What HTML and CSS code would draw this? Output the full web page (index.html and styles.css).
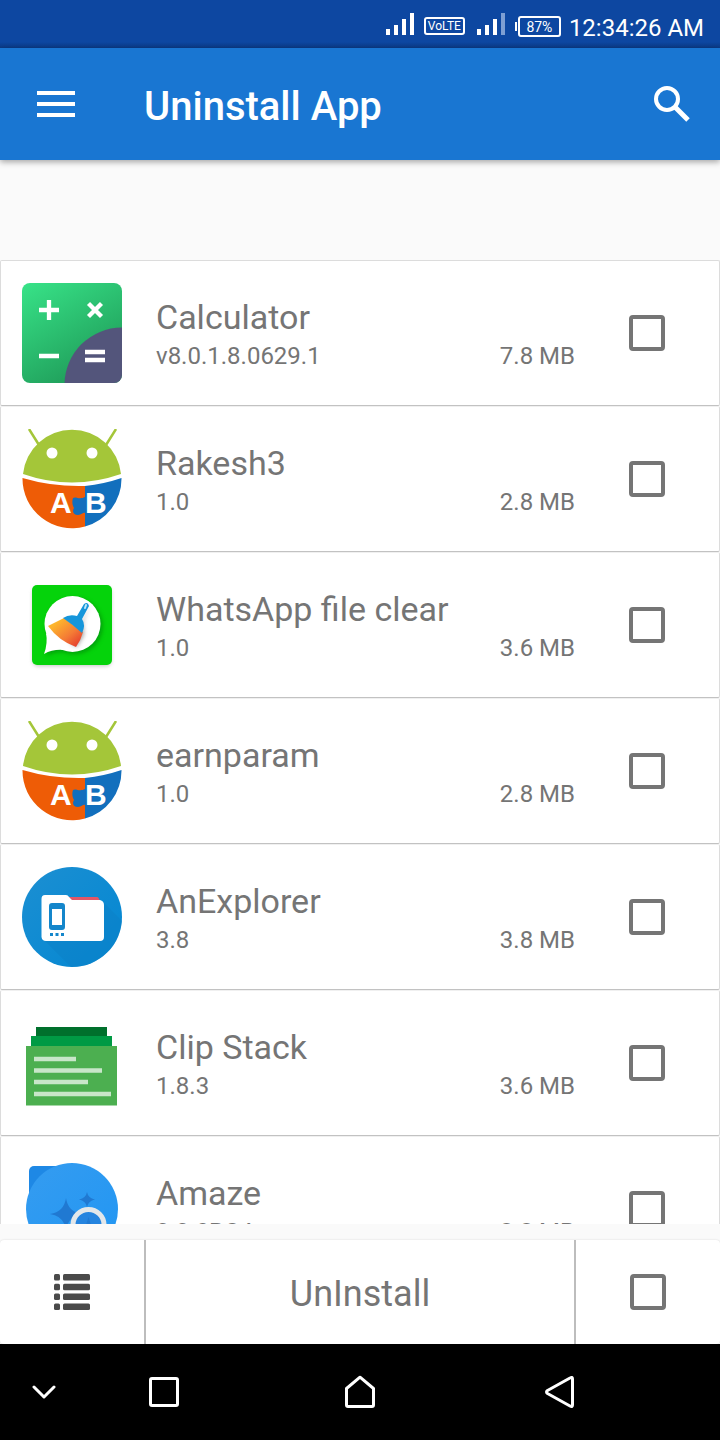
FILE: index.html
```html
<!DOCTYPE html>
<html lang="en">
<head>
  <meta charset="UTF-8" />
  <meta name="viewport" content="width=device-width, initial-scale=1" />
  <title>Uninstall App</title>
  <link rel="stylesheet" href="styles.css">
</head>
<body>
  <!-- Shared drawings -->
  <svg class="sprite" aria-hidden="true">
    <symbol id="robot" viewBox="0 0 100 100">
      <path d="M7 0L17 16M94 0L84 16" stroke="#a4c639" stroke-width="2.500" />
      <path d="M1 45A49.250 49.250 0 0 1 99 45Q50 62 1 45Z" fill="#a4c639" />
      <circle cx="30" cy="24" r="5.5" fill="#fff" />
      <circle cx="70" cy="24" r="5.5" fill="#fff" />
      <path d="M0.5 49Q31 58 63 57V97.5A49.5 49.5 0 0 1 0.5 49Z" fill="#ee5c06" />
      <path d="M63 57Q82 55 99.5 49A49.5 49.5 0 0 1 63 97.500V84C61 83 60 86 56 86C51 86 50 82 52 79C50 76 50 72 51 69C54 67 57 71 63 68Z" fill="#126fbd" />
      <text x="28" y="84" class="robot-letter">A</text>
      <text x="63" y="84" class="robot-letter">B</text>
    </symbol>
    <symbol id="signal" viewBox="0 0 28 22">
      <path d="M0 16h4v6H0zM8 12h4v10H8zM16 6h4v16h-4z" fill="#fff" />
    </symbol>
  </svg>

  <div class="status-bar">
    <svg class="signal" viewBox="0 0 28 22"><use href="#signal" /><path d="M24 0h4v22h-4z" fill="#fff" /></svg>
    <span class="volte">VoLTE</span>
    <svg class="signal" viewBox="0 0 28 22"><use href="#signal" /><path d="M24 0h4v22h-4z" fill="#7e9fd3" /></svg>
    <span class="battery"><span class="battery-level">87%</span></span>
    <span class="clock">12:34:26 AM</span>
  </div>

  <header class="app-bar">
    <button class="icon-button" aria-label="Menu">
      <svg width="38" height="26" viewBox="0 0 38 26"><path d="M0 2h38M0 13h38M0 24h38" stroke="#fff" stroke-width="4" /></svg>
    </button>
    <h1>Uninstall App</h1>
    <button class="icon-button" aria-label="Search">
      <svg width="36" height="36" viewBox="0 0 36 36" fill="none" stroke="#fff"><circle cx="13" cy="13" r="11" stroke-width="4" /><path d="M21 21L34 34" stroke-width="5" /></svg>
    </button>
  </header>

  <main class="app-list">
    <label class="app-row">
      <svg class="app-icon" viewBox="0 0 100 100">
        <defs>
          <linearGradient id="calcGreen" x1="0" y1="0" x2="0.6" y2="1"><stop offset="0" stop-color="#38e388" /><stop offset="1" stop-color="#1f9c59" /></linearGradient>
          <clipPath id="calcClip"><rect width="100" height="100" rx="8" /></clipPath>
        </defs>
        <g clip-path="url(#calcClip)">
          <rect width="100" height="100" fill="url(#calcGreen)" />
          <circle cx="100" cy="102" r="57.500" fill="#53557b" />
        </g>
        <path d="M17 27H37M27 17V37M66.500 20.500L79.500 33.500M79.500 20.500L66.500 33.500M17 73H37M63 69H83M63 77H83" stroke="#fff" stroke-width="4.300" />
      </svg>
      <span class="app-info">
        <span class="app-name">Calculator</span>
        <span class="app-meta"><span>v8.0.1.8.0629.1</span><span>7.8 MB</span></span>
      </span>
      <input type="checkbox" class="tick">
    </label>

    <label class="app-row">
      <svg class="app-icon" viewBox="0 0 100 100"><use href="#robot" /></svg>
      <span class="app-info">
        <span class="app-name">Rakesh3</span>
        <span class="app-meta"><span>1.0</span><span>2.8 MB</span></span>
      </span>
      <input type="checkbox" class="tick">
    </label>

    <label class="app-row">
      <svg class="app-icon" viewBox="0 0 100 100">
        <defs>
          <linearGradient id="bristle" x1="0" y1="0" x2="1" y2="1"><stop offset="0.2" stop-color="#fdb52c" /><stop offset="0.6" stop-color="#f47b35" /><stop offset="1" stop-color="#e02b2b" /></linearGradient>
          <filter id="soft" x="-30%" y="-30%" width="160%" height="160%"><feGaussianBlur stdDeviation="2" /></filter>
        </defs>
        <rect x="11" y="13" width="78" height="78" rx="5" fill="#999" opacity="0.6" filter="url(#soft)" />
        <rect x="10" y="10" width="80" height="80" rx="5" fill="#05d30b" />
        <g transform="translate(2 2)" fill="#067d09" opacity="0.6" filter="url(#soft)">
          <circle cx="50.500" cy="49" r="28" /><path d="M24 58Q26 68 22 79Q31 74 42 75Z" />
        </g>
        <g fill="#fff"><circle cx="50.500" cy="49" r="28" /><path d="M24 58Q26 68 22 79Q31 74 42 75Z" /></g>
        <path d="M68 30L61 47L62 60L55 72L48 68Z" fill="#555" opacity="0.5" filter="url(#soft)" />
        <path d="M42 43L26 51Q37 66 54 72Q59 65 61 57Z" fill="url(#bristle)" />
        <path d="M41 43Q47 39 55 41L62 29Q66 26 67 31L60 44Q64 50 60 58Q50 49 41 43Z" fill="#1696db" />
        <path d="M64 30L63 33" stroke="#bfe8fa" stroke-width="2" stroke-linecap="round" />
      </svg>
      <span class="app-info">
        <span class="app-name">WhatsApp file clear</span>
        <span class="app-meta"><span>1.0</span><span>3.6 MB</span></span>
      </span>
      <input type="checkbox" class="tick">
    </label>

    <label class="app-row">
      <svg class="app-icon" viewBox="0 0 100 100"><use href="#robot" /></svg>
      <span class="app-info">
        <span class="app-name">earnparam</span>
        <span class="app-meta"><span>1.0</span><span>2.8 MB</span></span>
      </span>
      <input type="checkbox" class="tick">
    </label>

    <label class="app-row">
      <svg class="app-icon" viewBox="0 0 100 100">
        <defs>
          <linearGradient id="explorerBlue" x1="0" y1="0" x2="1" y2="1"><stop offset="0" stop-color="#1c8fd2" /><stop offset="1" stop-color="#0387d2" /></linearGradient>
          <clipPath id="explorerClip"><circle cx="50" cy="50" r="50" /></clipPath>
        </defs>
        <circle cx="50" cy="50" r="50" fill="url(#explorerBlue)" />
        <path d="M21 72L49 100H100V54L80 34Z" fill="#0b80c6" opacity="0.5" clip-path="url(#explorerClip)" />
        <path d="M46 30H75Q77 30 78 35H46Z" fill="#e35667" />
        <path d="M23 28H44Q46 28 47 30L50 33H78Q82 34 82 38V70Q82 74 78 74H24Q20 74 19.500 70V32Q19.500 28 23 28Z" fill="#fff" />
        <path d="M30 36H40Q43 36 43 39V60Q43 63 40 63H30Q27 63 27 60V39Q27 36 30 36ZM30 42V58H40V42Z" fill="#1486cb" fill-rule="evenodd" />
        <path d="M28 66h3v3h-3zM33.500 66h3v3h-3zM39 66h3v3h-3z" fill="#1486cb" />
      </svg>
      <span class="app-info">
        <span class="app-name">AnExplorer</span>
        <span class="app-meta"><span>3.8</span><span>3.8 MB</span></span>
      </span>
      <input type="checkbox" class="tick">
    </label>

    <label class="app-row">
      <svg class="app-icon" viewBox="0 0 100 100">
        <path d="M14 14H85V24H14Z" fill="#00702c" />
        <path d="M9 23H90V34H9Z" fill="#009a44" />
        <path d="M4 33H95V92.500H4Z" fill="#4caf50" />
        <path d="M12 46H54M12 57.500H80M12 69H66M12 81H89" stroke="#c8e6c9" stroke-width="4.600" />
      </svg>
      <span class="app-info">
        <span class="app-name">Clip Stack</span>
        <span class="app-meta"><span>1.8.3</span><span>3.6 MB</span></span>
      </span>
      <input type="checkbox" class="tick">
    </label>

    <label class="app-row">
      <svg class="app-icon" viewBox="0 0 100 100">
        <defs>
          <linearGradient id="amazeBlue" x1="0" y1="0" x2="1" y2="1"><stop offset="0" stop-color="#359cf0" /><stop offset="1" stop-color="#2196f3" /></linearGradient>
        </defs>
        <rect x="7" y="7" width="60" height="60" rx="5" fill="#1e88e5" />
        <circle cx="50" cy="50" r="46" fill="url(#amazeBlue)" />
        <path d="M44 39Q46 53 60 55Q46 57 44 71Q42 57 28 55Q42 53 44 39ZM65 33Q66 39 73 40.500Q66 42 65 48Q64 42 57 40.500Q64 39 65 33Z" fill="#2079d2" />
        <circle cx="66.500" cy="66" r="15.500" fill="#2584df" stroke="#e3e7ea" stroke-width="5" />
        <path d="M66.500 58L69 66H64Z" fill="#2079d2" />
      </svg>
      <span class="app-info">
        <span class="app-name">Amaze</span>
        <span class="app-meta"><span>3.3.0RC4</span><span>8.8 MB</span></span>
      </span>
      <input type="checkbox" class="tick">
    </label>
  </main>

  <div class="action-bar">
    <button class="action" aria-label="List options">
      <svg width="36" height="36" viewBox="0 0 36 36" fill="#4a4a4a">
        <rect width="6" height="6.500" rx="1.500" /><rect x="9" width="27" height="6.500" rx="1.500" />
        <rect y="9.800" width="6" height="6.500" rx="1.500" /><rect x="9" y="9.800" width="27" height="6.500" rx="1.500" />
        <rect y="19.600" width="6" height="6.500" rx="1.500" /><rect x="9" y="19.600" width="27" height="6.500" rx="1.500" />
        <rect y="29.500" width="6" height="6.500" rx="1.500" /><rect x="9" y="29.500" width="27" height="6.500" rx="1.500" />
      </svg>
    </button>
    <button class="action uninstall">UnInstall</button>
    <label class="action"><input type="checkbox" class="tick" aria-label="Select all"></label>
  </div>

  <nav class="system-nav">
    <button aria-label="Hide navigation bar">
      <svg width="24" height="14" viewBox="0 0 24 14"><path d="M2 2L12 12L22 2" /></svg>
    </button>
    <button aria-label="Recent apps">
      <svg width="32" height="32" viewBox="0 0 32 32"><rect x="2.500" y="2.500" width="27" height="27" rx="1.500" /></svg>
    </button>
    <button aria-label="Home">
      <svg width="32" height="34" viewBox="0 0 32 34"><path d="M2.500 13.500L16 2.200L29.500 13.500V30Q29.500 31.500 28 31.500H4Q2.500 31.500 2.500 30Z" /></svg>
    </button>
    <button aria-label="Back">
      <svg width="32" height="34" viewBox="0 0 32 34"><path d="M28.500 4V30Q28.500 32.500 26 31L3.500 18.500Q1.500 17 3.500 15.500L26 3Q28.500 1.500 28.500 4Z" /></svg>
    </button>
  </nav>
</body>
</html>
```
FILE: styles.css
```css
* {
  box-sizing: border-box;
}

body {
  margin: 0;
  height: 100vh;
  display: flex;
  flex-direction: column;
  font-family: Roboto, "Liberation Sans", sans-serif;
  background: #fafafa;
  color: #757575;
}

button {
  font: inherit;
  color: inherit;
  background: none;
  border: none;
  padding: 0;
  cursor: pointer;
}

svg {
  display: block;
}

.sprite {
  display: none;
}

.robot-letter {
  font-family: "Liberation Sans", sans-serif;
  font-size: 30px;
  font-weight: bold;
  fill: #fff;
}

/* Status bar */
.status-bar {
  display: flex;
  align-items: center;
  justify-content: flex-end;
  height: 48px;
  padding: 4px 16px 0 0;
  background: linear-gradient(#0d47a1 42px, #0b3a86);
  color: #fff;
}

.signal {
  width: 28px;
  height: 22px;
  margin: 0 10px 4px 12px;
}

.volte {
  width: 41px;
  height: 18px;
  border: 2px solid #fff;
  border-radius: 3px;
  font-size: 12px;
  line-height: 14px;
  text-align: center;
}

.battery {
  display: flex;
  align-items: center;
  margin-right: 8px;
}

.battery::before {
  content: "";
  width: 2px;
  height: 9px;
  margin-right: 1px;
  background: #fff;
}

.battery-level {
  width: 43px;
  height: 21px;
  border: 2px solid #fff;
  border-radius: 3px;
  font-size: 14px;
  line-height: 18px;
  text-align: center;
}

.clock {
  padding-top: 4px;
  font-size: 24px;
  line-height: 28px;
}

/* App bar */
.app-bar {
  display: flex;
  align-items: center;
  height: 112px;
  padding: 0 30px 0 37px;
  background: #1976d2;
  color: #fff;
  box-shadow: 0 2px 6px rgba(0, 0, 0, 0.35);
}

.app-bar h1 {
  flex: 1;
  margin: 0;
  padding: 6px 0 0 69px;
  font-size: 40px;
  font-weight: 500;
  line-height: 48px;
}

/* App list */
.app-list {
  flex: 1;
  min-height: 0;
  overflow: hidden;
  margin-top: 100px;
  margin-bottom: 16px;
}

.app-row {
  display: flex;
  align-items: center;
  height: 146px;
  padding: 0 54px 0 21px;
  background: #fff;
  border: 1px solid #dcdcdc;
  border-bottom-color: #c2c2c2;
  border-radius: 2px;
}

.app-row + .app-row {
  border-top-color: #f0f0f0;
}

.app-icon {
  width: 100px;
  height: 100px;
  flex: none;
}

.app-info {
  flex: 1;
  margin: 0 54px 0 34px;
  padding-top: 2px;
}

.app-name {
  display: block;
  font-size: 34px;
  line-height: 44px;
}

.app-meta {
  display: flex;
  justify-content: space-between;
  font-size: 24px;
  line-height: 34px;
}

.tick {
  appearance: none;
  flex: none;
  width: 36px;
  height: 36px;
  margin: 0;
  border: 4px solid #757575;
  border-radius: 4px;
}

.tick:checked {
  background: #757575;
}

/* Bottom actions */
.action-bar {
  display: grid;
  grid-template-columns: 144px 1fr 144px;
  height: 104px;
  background: #fff;
  border-radius: 4px;
  box-shadow: 0 0 2px rgba(0, 0, 0, 0.15);
}

.action {
  display: flex;
  align-items: center;
  justify-content: center;
}

.uninstall {
  padding-top: 4px;
  border: solid #bdbdbd;
  border-width: 0 2px;
  font-size: 36px;
}

/* System navigation */
.system-nav {
  display: grid;
  grid-template-columns: 11fr 19fr 30fr 20fr 10fr;
  height: 96px;
  background: #000;
}

.system-nav button {
  display: flex;
  align-items: center;
  justify-content: center;
}

.system-nav svg {
  fill: none;
  stroke: #fff;
  stroke-width: 3;
  stroke-linecap: round;
  stroke-linejoin: round;
}
```
